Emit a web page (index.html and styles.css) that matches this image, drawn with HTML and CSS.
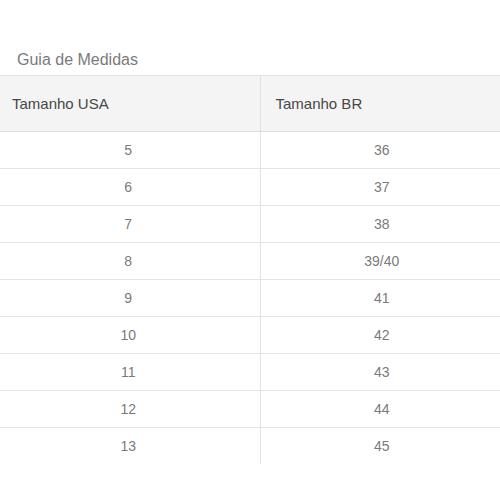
FILE: index.html
```html
<!DOCTYPE html>
<html>
<head>
<meta charset="utf-8">
<link rel="stylesheet" href="styles.css">
</head>
<body>
<div class="page">
  <h2 class="title">Guia de Medidas</h2>
  <table class="sizes">
    <thead>
      <tr><th class="c1">Tamanho USA</th><th class="c2">Tamanho BR</th></tr>
    </thead>
    <tbody>
      <tr><td class="c1">5</td><td class="c2">36</td></tr>
      <tr><td class="c1">6</td><td class="c2">37</td></tr>
      <tr><td class="c1">7</td><td class="c2">38</td></tr>
      <tr><td class="c1">8</td><td class="c2">39/40</td></tr>
      <tr><td class="c1">9</td><td class="c2">41</td></tr>
      <tr><td class="c1">10</td><td class="c2">42</td></tr>
      <tr><td class="c1">11</td><td class="c2">43</td></tr>
      <tr><td class="c1">12</td><td class="c2">44</td></tr>
      <tr><td class="c1">13</td><td class="c2">45</td></tr>
    </tbody>
  </table>
</div>
</body>
</html>
```
FILE: styles.css
```css
html, body {
  margin: 0;
  padding: 0;
  background: #fff;
  overflow: hidden;
}
.page {
  font-family: "Liberation Sans", Arial, sans-serif;
  padding-top: 50px;
}
.title {
  margin: 0 0 5px 17px;
  font-size: 16px;
  line-height: 20px;
  font-weight: normal;
  color: #7a7a7a;
}
.sizes {
  border-collapse: collapse;
  margin-left: -3px;
  width: 506px;
  table-layout: fixed;
}
.sizes th {
  height: 56px;
  padding: 0 0 0 15px;
  box-sizing: border-box;
  text-align: left;
  font-weight: normal;
  font-size: 15px;
  line-height: 17px;
  color: #474747;
  background: #f4f4f4;
  border-top: 1px solid #e2e2e2;
  border-bottom: 1px solid #dcdcdc;
  vertical-align: middle;
}
.sizes td {
  height: 36px;
  padding: 0;
  text-align: center;
  font-size: 14px;
  line-height: 16px;
  color: #7a7a7a;
  border-bottom: 1px solid #e4e4e4;
  vertical-align: middle;
}
.sizes tbody tr:last-child td {
  border-bottom: none;
}
.sizes .c1 {
  width: 263px;
}
.sizes .c2 {
  border-left: 1px solid #e2e2e2;
}
```
